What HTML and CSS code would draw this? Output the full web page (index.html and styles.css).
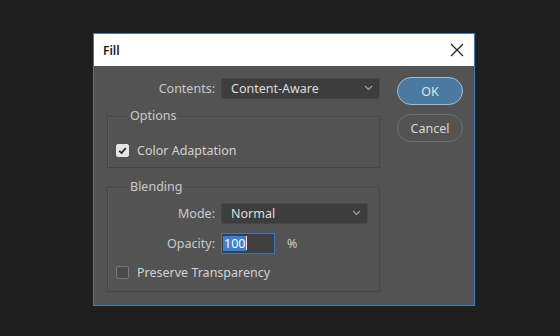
FILE: index.html
```html
<!DOCTYPE html>
<html lang="en">
<head>
  <meta charset="UTF-8" />
  <title>Fill</title>
  <link rel="stylesheet" href="styles.css">
</head>
<body>
  <div class="dialog">
    <div class="titlebar">
      <span class="title">Fill</span>
      <svg class="close" width="14" height="14" viewBox="0 0 14 14">
        <path d="M1 1 L13 13 M13 1 L1 13" stroke="#222" stroke-width="1.2" fill="none"/>
      </svg>
    </div>

    <div class="body">
      <div class="main">
        <div class="row">
          <span class="label wide">Contents:</span>
          <div class="select wide">
            <span>Content-Aware</span>
            <svg width="9" height="6" viewBox="0 0 9 6"><path d="M1 1 L4.5 4.5 L8 1" stroke="#a8a8a8" stroke-width="1.1" fill="none"/></svg>
          </div>
        </div>

        <fieldset class="group options">
          <legend>Options</legend>
          <div class="check-row">
            <span class="box on">
              <svg width="13" height="13" viewBox="0 0 13 13"><path d="M3.2 6.8 L5.5 9 L9.8 4.2" stroke="#2a2a2a" stroke-width="1.8" fill="none"/></svg>
            </span>
            <span>Color Adaptation</span>
          </div>
        </fieldset>

        <fieldset class="group blending">
          <legend>Blending</legend>
          <div class="row">
            <span class="label">Mode:</span>
            <div class="select">
              <span>Normal</span>
              <svg width="9" height="6" viewBox="0 0 9 6"><path d="M1 1 L4.5 4.5 L8 1" stroke="#a8a8a8" stroke-width="1.1" fill="none"/></svg>
            </div>
          </div>
          <div class="row">
            <span class="label">Opacity:</span>
            <div class="field"><span class="sel">100</span><span class="caret"></span></div>
            <span class="unit">%</span>
          </div>
          <div class="check-row">
            <span class="box"></span>
            <span>Preserve Transparency</span>
          </div>
        </fieldset>
      </div>

      <div class="buttons">
        <button class="btn primary">OK</button>
        <button class="btn">Cancel</button>
      </div>
    </div>
  </div>
</body>
</html>
```

FILE: styles.css
```css
body {
  margin: 0;
  background-color: #1f1f1f;
  font-family: "Noto Sans", "Open Sans", sans-serif;
  font-size: 12.5px;
  color: #cfcfcf;
}

.dialog {
  margin: 33px 0 0 93px;
  width: 380px;
  height: 271px;
  border: 1px solid #3d7db3;
  background-color: #535353;
}

.titlebar {
  height: 32px;
  background-color: #ffffff;
  display: flex;
  align-items: center;
  justify-content: space-between;
  padding: 0 10px 0 9px;
}

.title {
  color: #1a1a1a;
  font-size: 12px;
  font-weight: 600;
}

.body {
  display: flex;
  gap: 17px;
  padding: 11px 0 0 13px;
}

.main {
  width: 273px;
}

.row {
  display: flex;
  align-items: center;
  gap: 6px;
  height: 22px;
}

.label {
  width: 99px;
  text-align: right;
  color: #cacaca;
}

.label.wide {
  width: 108px;
}

.select {
  width: 147px;
  height: 21px;
  box-sizing: border-box;
  background-color: #3d3d3d;
  border: 1px solid #474747;
  border-radius: 2px;
  display: flex;
  align-items: center;
  justify-content: space-between;
  padding: 0 6px 0 9px;
  color: #dddddd;
}

.select.wide {
  width: 159px;
}

.group {
  margin: 9px 0 0;
  padding: 16px 8px 7px;
  border: 1px solid #464646;
  box-shadow: inset 1px 1px 0 #5a5a5a;
}

.group legend {
  margin-left: 12px;
  padding: 0 2px;
  line-height: 16px;
  color: #cacaca;
  font-size: 12.5px;
}

.blending {
  margin-top: 11px;
  padding-top: 7px;
  padding-bottom: 9px;
  display: flex;
  flex-direction: column;
  gap: 8px;
}

.check-row {
  display: flex;
  align-items: center;
  gap: 8px;
  height: 20px;
  color: #d2d2d2;
}

.box {
  width: 13px;
  height: 13px;
  box-sizing: border-box;
  border: 1px solid #777;
  border-radius: 2px;
  background-color: #4a4a4a;
}

.box.on {
  border-color: #e4e4e4;
  background-color: #e4e4e4;
  display: flex;
}

.box.on svg {
  margin: -1px;
}

.field {
  width: 54px;
  height: 21px;
  box-sizing: border-box;
  border: 1px solid #3a78c2;
  background-color: #3f3f3f;
  display: flex;
  align-items: center;
  padding-left: 1px;
}

.sel {
  background-color: #3b7fd6;
  color: #ffffff;
  line-height: 15px;
  padding: 0 1px;
}

.caret {
  width: 1px;
  height: 14px;
  background-color: #e8e8e8;
}

.unit {
  margin-left: 6px;
  color: #cacaca;
}

.buttons {
  display: flex;
  flex-direction: column;
  gap: 9px;
}

.btn {
  width: 66px;
  height: 28px;
  border-radius: 14px;
  border: 1px solid #6e6e6e;
  background-color: #535353;
  color: #d8d8d8;
  font-family: "Noto Sans", "Open Sans", sans-serif;
  font-size: 12.5px;
  padding: 0;
}

.btn.primary {
  background-color: #4a7a9f;
  border-color: #9dbdd3;
  color: #d6e4ee;
}
```
